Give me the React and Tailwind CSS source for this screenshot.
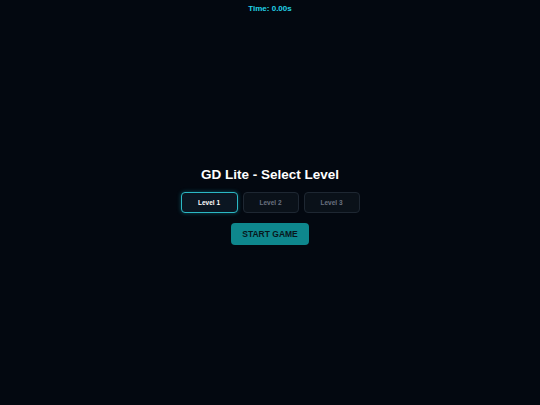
import React, { useState } from 'react';

const levels = ['Level 1', 'Level 2', 'Level 3'];

const App = () => {
  const [selected, setSelected] = useState(0);

  return (
    <div className="w-full h-[405px] bg-[#030810] flex flex-col items-center font-['Liberation_Sans',Arial,sans-serif]">
      <div className="pt-[4px] text-[8px] leading-[10px] font-bold text-[#22d3e6]">Time: 0.00s</div>

      <div className="flex-1 flex flex-col items-center justify-center pb-[7px]">
        <h1 className="text-[13.5px] leading-[16px] font-bold text-white">GD Lite - Select Level</h1>

        <div className="mt-[9px] flex gap-[5px]">
          {levels.map((name, i) => (
            <button
              key={name}
              onClick={() => setSelected(i)}
              className={
                i === selected
                  ? 'w-[57px] h-[21px] rounded-[4px] border border-[#2bb8c4] bg-[#0b1622] text-[6.5px] font-bold text-white shadow-[0_0_4px_rgba(34,211,230,0.35)]'
                  : 'w-[56px] h-[21px] rounded-[4px] border border-[#1e2732] bg-[#0a1119] text-[6.5px] font-bold text-[#6b7280]'
              }
            >
              {name}
            </button>
          ))}
        </div>

        <button className="mt-[10px] w-[78px] h-[22px] rounded-[4px] bg-[#0e878d] text-[8.5px] font-bold text-[#08161c]">
          START GAME
        </button>
      </div>
    </div>
  );
};

export default App;
